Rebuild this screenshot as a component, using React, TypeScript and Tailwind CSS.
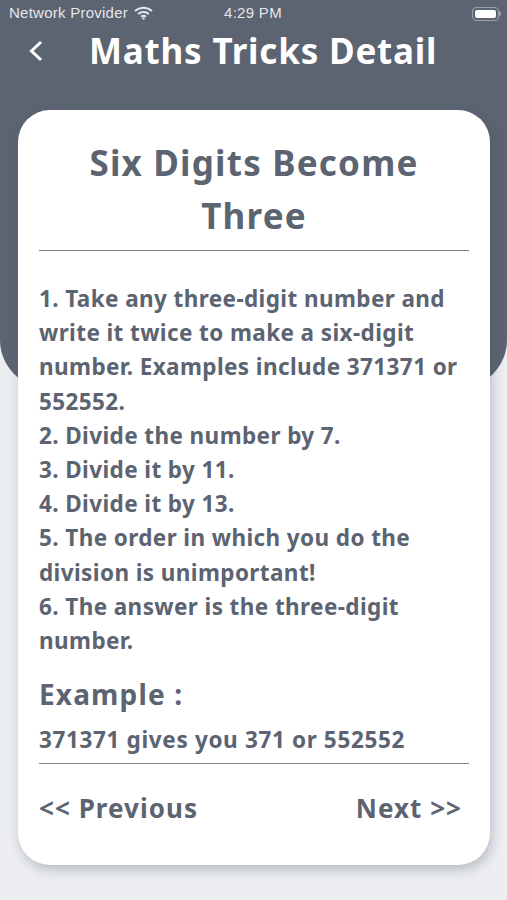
const steps = [
  ['1. Take any three-digit number and', 'write it twice to make a six-digit', 'number. Examples include 371371 or', '552552.'],
  ['2. Divide the number by 7.'],
  ['3. Divide it by 11.'],
  ['4. Divide it by 13.'],
  ['5. The order in which you do the', 'division is unimportant!'],
  ['6. The answer is the three-digit', 'number.'],
];

export default function App() {
  return (
    <div className="h-[900px] w-[507px] overflow-hidden bg-[#eceef2] font-['Noto_Sans',sans-serif]">
      <div className="h-[388px] rounded-b-[48px] bg-[#5c6371] text-white">
        <div className="relative flex h-[27px] items-center pl-[9px] pr-[6px] text-[15px] text-[#e4e6ea]">
          <span className="font-['Liberation_Sans',sans-serif] tracking-[0.25px]">Network Provider</span>
          <svg className="ml-[6px] mb-[2px]" width="19" height="14" viewBox="0 0 19 14" fill="none" stroke="currentColor" strokeWidth="2">
            <path d="M1 5 C6 0.5 13 0.5 18 5" />
            <path d="M4 8 C7.2 5.3 11.8 5.3 15 8" />
            <path d="M7 10.8 C8.5 9.6 10.5 9.6 12 10.8" />
            <circle cx="9.5" cy="12.4" r="1.2" fill="currentColor" stroke="none" />
          </svg>
          <span className="absolute left-[224px] font-['Liberation_Sans',sans-serif] tracking-[0.3px]">4:29 PM</span>
          <div className="ml-auto flex items-center">
            <div className="flex h-[14px] w-[27px] items-center rounded-[4px] border border-[#9a9ea8] p-[2px]">
              <div className="h-full w-full rounded-[2px] bg-white" />
            </div>
            <div className="h-[5px] w-[2px] rounded-r-sm bg-[#9a9ea8]" />
          </div>
        </div>
        <div className="flex h-[46px] items-center">
          <svg className="ml-[28px] mt-[2px]" width="15" height="22" viewBox="0 0 15 22" fill="none" stroke="currentColor" strokeWidth="3">
            <path d="M13 2 L3.5 11 L13 20" />
          </svg>
          <h1 className="ml-[46px] text-[35px] leading-none font-bold tracking-[0.8px] whitespace-nowrap">Maths Tricks Detail</h1>
        </div>
      </div>
      <div className="relative ml-[18px] -mt-[278px] h-[755px] w-[472px] rounded-[32px] bg-white px-[21px] pt-[26px] text-[#5c6371] shadow-[2px_5px_12px_rgba(70,75,90,0.3)]">
        <h2 className="text-center text-[35px] leading-[53px] font-bold tracking-[1.2px]">
          Six Digits Become
          <br />
          Three
        </h2>
        <div className="mt-[8px] h-px bg-[#7c818c]" />
        <div className="mt-[31px] text-[22.5px] leading-[34.2px] font-bold tracking-[0.4px] whitespace-nowrap">
          {steps.map((lines, i) => (
            <div key={i}>
              {lines.map(line => (
                <div key={line}>{line}</div>
              ))}
            </div>
          ))}
        </div>
        <h3 className="mt-[17px] text-[28px] leading-[38px] font-bold tracking-[1.15px]">Example :</h3>
        <p className="mt-[10px] text-[22.5px] leading-[34px] font-bold tracking-[0.65px] whitespace-nowrap">371371 gives you 371 or 552552</p>
        <div className="mt-[6px] h-px bg-[#7c818c]" />
        <div className="mt-[26px] flex justify-between pr-[7px] text-[26px] leading-[36px] font-bold tracking-[1.05px]">
          <span>&lt;&lt; Previous</span>
          <span>Next &gt;&gt;</span>
        </div>
      </div>
    </div>
  );
}
